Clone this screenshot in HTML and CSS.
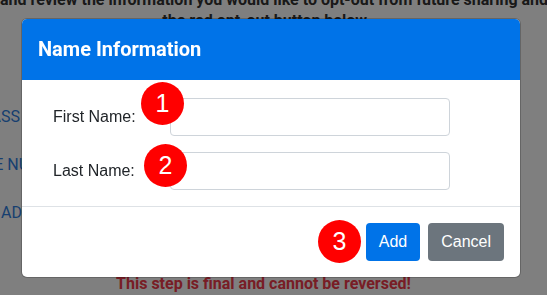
FILE: index.html
```html
<!DOCTYPE html>
<html>
<head>
  <title>Opt-Out</title>
  <link rel="stylesheet" href="styles.css">
</head>
<body>
  <div class="page">
    <p class="intro">and review the information you would like to opt-out from future sharing and<br>the red opt-out button below.</p>

    <div class="options">
      <span class="option option-class">CLASS</span>
      <span class="option option-phone">PHONE NU</span>
      <span class="option option-email">EMAIL AD</span>
    </div>

    <p class="warning">This step is final and cannot be reversed!</p>
  </div>

  <div class="backdrop"></div>

  <div class="modal">
    <div class="modal-header">
      <h5 class="modal-title">Name Information</h5>
    </div>
    <div class="modal-body">
      <div class="form-row">
        <label for="first-name">First Name:</label>
        <input type="text" id="first-name" class="form-control">
      </div>
      <div class="form-row">
        <label for="last-name">Last Name:</label>
        <input type="text" id="last-name" class="form-control">
      </div>
    </div>
    <div class="modal-footer">
      <button class="btn btn-primary" id="add-button">Add</button>
      <button class="btn btn-secondary" id="cancel-button">Cancel</button>
    </div>

    <span class="step step-1">1</span>
    <span class="step step-2">2</span>
    <span class="step step-3">3</span>
  </div>
</body>
</html>
```

FILE: styles.css
```css
body {
  margin: 0;
  background-color: #fff;
  font-family: "Liberation Sans", Arial, sans-serif;
  overflow: hidden;
}

.page {
  padding-right: 14px;
}

.intro {
  margin: -11px 0 0;
  font-family: Roboto, sans-serif;
  font-weight: bold;
  font-size: 16px;
  line-height: 21px;
  color: #333;
  text-align: center;
  white-space: nowrap;
}

.options {
  width: 32px;
  margin-top: 62px;
  display: flex;
  flex-direction: column;
  align-items: flex-end;
}

.option {
  white-space: nowrap;
  font-family: Roboto, sans-serif;
  font-size: 16px;
  line-height: 48px;
  color: #2f7fe0;
}

.option-class {
  padding-right: 12px;
}

.option-phone {
  padding-right: 3px;
}

.option-email {
  padding-right: 10px;
}

.warning {
  margin: 35px 0 0;
  padding-right: 6px;
  font-family: Roboto, sans-serif;
  font-weight: bold;
  font-size: 16px;
  line-height: 24px;
  color: #f03a4a;
  text-align: center;
}

.backdrop {
  position: fixed;
  top: 0;
  left: 0;
  right: 0;
  bottom: 0;
  background-color: rgba(0, 0, 0, 0.5);
}

.modal {
  position: fixed;
  top: 19px;
  left: 22px;
  width: 498px;
  background-color: #fff;
  border-radius: 5px;
  box-shadow: 0 0 0 1px rgba(0, 0, 0, 0.2);
}

.modal-header {
  background-color: #0073e8;
  padding: 16px;
  border-radius: 5px 5px 0 0;
}

.modal-title {
  margin: 0;
  font-family: Roboto, sans-serif;
  font-weight: bold;
  font-size: 20px;
  line-height: 29px;
  color: #fff;
}

.modal-body {
  padding: 18px 16px 16px 31px;
  display: flex;
  flex-direction: column;
  gap: 16px;
}

.form-row {
  display: grid;
  grid-template-columns: 117px 280px;
  align-items: center;
}

.form-row label {
  font-size: 16px;
  color: #212529;
}

.form-control {
  box-sizing: border-box;
  height: 38px;
  width: 100%;
  margin: 0;
  border: 1px solid #ced4da;
  border-radius: 4px;
  padding: 6px 12px;
  font-size: 16px;
}

.modal-footer {
  border-top: 1px solid #dee2e6;
  padding: 16px;
  display: flex;
  justify-content: flex-end;
  gap: 8px;
}

.btn {
  height: 38px;
  border: none;
  border-radius: 4px;
  padding: 0 13px;
  font-family: "Liberation Sans", Arial, sans-serif;
  font-size: 16px;
  color: #fff;
  cursor: pointer;
}

.btn-primary {
  background-color: #0073e8;
}

.btn-secondary {
  background-color: #6c757d;
}

.step {
  position: absolute;
  width: 43px;
  height: 43px;
  border-radius: 50%;
  background-color: #ff0000;
  color: #fff;
  font-size: 25px;
  line-height: 43px;
  text-align: center;
}

.step-1 {
  left: 119px;
  top: 63px;
}

.step-2 {
  left: 122px;
  top: 125px;
}

.step-3 {
  left: 296px;
  top: 201px;
}
```
